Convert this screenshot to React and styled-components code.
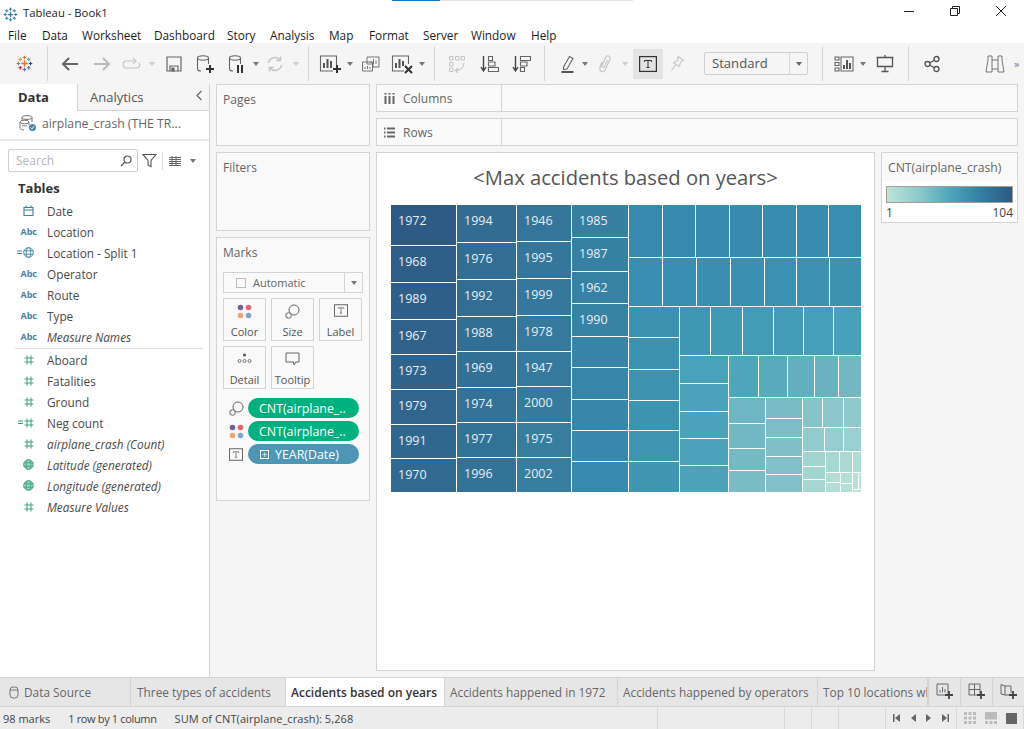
import React from 'react';
import styled, { createGlobalStyle } from 'styled-components';

const GlobalStyle = createGlobalStyle`
  html, body { margin: 0; padding: 0; background: #fff; }
  body { font-family: "Open Sans", "Noto Sans", sans-serif; font-size: 12px; color: #444; overflow: hidden; }
  * { box-sizing: border-box; }
`;

const Page = styled.div`
  width: 1024px;
  height: 729px;
  display: flex;
  flex-direction: column;
  overflow: hidden;
`;

/* window chrome */
const TopStrip = styled.div`
  height: 1px;
  flex: none;
  display: flex;
  padding-left: 392px;
`;
const StripPart = styled.div`
  width: ${p => p.$w}px;
  background: ${p => p.$color};
`;
const TitleBar = styled.div`
  height: 26px;
  flex: none;
  display: flex;
  align-items: center;
  padding-left: 3px;
`;
const TitleText = styled.div`
  font-size: 11.3px;
  color: #222;
  margin-left: 5px;
  flex: 1;
  position: relative;
  top: -2px;
`;
const WinButton = styled.div`
  width: ${p => p.$w}px;
  display: flex;
  justify-content: center;
  position: relative;
  top: -3px;
`;
const MenuBar = styled.div`
  height: 16px;
  flex: none;
  display: flex;
  gap: 16px;
  padding-left: 8px;
  align-items: center;
`;
const MenuItem = styled.div`
  font-size: 11.8px;
  color: #1c1c1c;
  width: ${p => p.$w}px;
  white-space: nowrap;
`;

/* toolbar */
const Toolbar = styled.div`
  height: 41px;
  flex: none;
  background: #f5f5f5;
  display: flex;
  align-items: center;
`;
const Tool = styled.div`
  width: ${p => p.$w}px;
  margin-left: ${p => p.$ml || 0}px;
  height: ${p => (p.$active ? 30 : 24)}px;
  flex: none;
  display: flex;
  align-items: center;
  justify-content: center;
  background: ${p => (p.$active ? '#e3e3e3' : 'transparent')};
`;
const ToolSep = styled.div`
  width: 1px;
  height: 35px;
  flex: none;
  margin-left: ${p => p.$ml}px;
  background: #d6d6d6;
`;
const Caret = styled.span`
  display: block;
  width: 0;
  height: 0;
  border-left: 3.5px solid transparent;
  border-right: 3.5px solid transparent;
  border-top: 4px solid ${p => p.$color || '#777'};
`;
const Select = styled.div`
  width: 104px;
  height: 23px;
  flex: none;
  margin-left: ${p => p.$ml}px;
  border: 1px solid #cfcfcf;
  border-radius: 2px;
  display: flex;
  align-items: center;
  justify-content: space-between;
  font-size: 13.1px;
  color: #555;
  padding-left: 7px;
`;
const SelectLabel = styled.span`
  position: relative;
  top: -1px;
`;
const SelectArrow = styled.div`
  width: 18px;
  height: 100%;
  border-left: 1px solid #d8d8d8;
  display: flex;
  align-items: center;
  justify-content: center;
`;
const Chevrons = styled.div`
  font-size: 11px;
  color: #777;
  width: 10px;
  margin-left: 5px;
  flex: none;
`;

/* main */
const Main = styled.div`
  flex: 1;
  min-height: 0;
  display: flex;
  background: #f5f5f5;
`;

const DataPane = styled.div`
  width: 210px;
  flex: none;
  background: #fff;
  border-right: 1px solid #d4d4d4;
`;
const PaneTabs = styled.div`
  height: 27px;
  display: flex;
`;
const DataTab = styled.div`
  width: 77px;
  padding: 4px 0 0 18px;
  font-size: 13px;
  font-weight: 700;
  color: #333;
`;
const AnalyticsTab = styled.div`
  flex: 1;
  display: flex;
  justify-content: space-between;
  background: #f5f5f5;
  border-left: 1px solid #d4d4d4;
  border-bottom: 1px solid #d4d4d4;
  padding: 4px 6px 0 12px;
  font-size: 13px;
  color: #555;
`;
const SourceRow = styled.div`
  height: 30px;
  display: flex;
  align-items: center;
  gap: 4px;
  padding: 0 0 3px 19px;
  font-size: 12.2px;
  color: #666;
  border-bottom: 2px solid #ececec;
`;
const SearchRow = styled.div`
  display: flex;
  align-items: center;
  padding: 7px 0 0 8px;
  height: 32px;
`;
const SearchBox = styled.div`
  width: 130px;
  height: 23px;
  border: 1px solid #cfcfcf;
  border-radius: 2px;
  display: flex;
  align-items: center;
  justify-content: space-between;
  padding: 0 5px 0 7px;
  color: #b5b5b5;
  font-size: 12px;
`;
const SearchSep = styled.div`
  width: 1px;
  height: 18px;
  background: #ddd;
  margin: 0 6px 0 5px;
`;
const TablesHead = styled.div`
  font-size: 13px;
  font-weight: 700;
  color: #333;
  padding: 6px 0 0 18px;
  height: 27px;
`;
const FieldList = styled.div`
  display: flex;
  flex-direction: column;
`;
const Field = styled.div`
  height: 21px;
  flex: none;
  display: flex;
  align-items: center;
  font-size: 11.8px;
  color: #4a4a4a;
  font-style: ${p => (p.$calc ? 'italic' : 'normal')};
`;
const FieldIcon = styled.div`
  width: 47px;
  flex: none;
  padding-right: 13px;
  display: flex;
  align-items: center;
  justify-content: flex-end;
`;
const AbcIcon = styled.span`
  font-size: 9px;
  font-weight: 700;
  font-style: normal;
  color: #4c7f9f;
  margin-right: -3px;
`;
const FieldDivider = styled.div`
  height: 1px;
  flex: none;
  background: #ddd;
  margin: 1px 6px 0 15px;
`;

const ShelfColumn = styled.div`
  width: 154px;
  flex: none;
  margin-left: 6px;
  display: flex;
  flex-direction: column;
  gap: 6px;
`;
const Card = styled.div`
  height: ${p => p.$h}px;
  flex: none;
  background: #f9f9f9;
  border: 1px solid #d4d4d4;
  padding: 6px 0 0 6px;
  font-size: 12px;
  color: #666;
`;
const MarksTitle = styled.div`
  height: 28px;
`;
const MarkSelect = styled.div`
  width: 140px;
  height: 21px;
  border: 1px solid #d4d4d4;
  display: flex;
  align-items: center;
  font-size: 11px;
  color: #666;
  padding-left: 12px;
  gap: 7px;
`;
const CheckBox = styled.span`
  width: 10px;
  height: 10px;
  border: 1px solid #bbb;
  background: #fafafa;
  flex: none;
`;
const MarkArrow = styled.div`
  margin-left: auto;
  width: 18px;
  height: 100%;
  border-left: 1px solid #d4d4d4;
  display: flex;
  align-items: center;
  justify-content: center;
`;
const MarkGrid = styled.div`
  display: grid;
  grid-template-columns: 43px 43px 43px;
  grid-auto-rows: 43px;
  column-gap: 5px;
  row-gap: 5px;
  margin-top: 5px;
  width: 140px;
`;
const MarkButton = styled.div`
  border: 1px solid #d4d4d4;
  display: flex;
  flex-direction: column;
  align-items: center;
  justify-content: space-between;
  padding: 5px 0 1px;
  font-size: 11px;
  color: #555;
`;
const PillList = styled.div`
  display: flex;
  flex-direction: column;
  gap: 3px;
  margin-top: 9px;
`;
const PillRow = styled.div`
  display: flex;
  align-items: center;
  height: 20px;
`;
const PillIcon = styled.div`
  width: 25px;
  padding-left: 6px;
  flex: none;
  display: flex;
  align-items: center;
`;
const Pill = styled.div`
  width: 111px;
  height: 20px;
  border-radius: 10px;
  background: ${p => p.$color};
  color: #fff;
  font-size: 12.4px;
  display: flex;
  align-items: center;
  gap: 6px;
  padding-left: ${p => (p.$plus ? 12 : 11)}px;
  white-space: nowrap;
`;
const PlusBox = styled.span`
  width: 9px;
  height: 9px;
  border: 1px solid #fff;
  display: flex;
  align-items: center;
  justify-content: center;
  font-size: 9px;
  line-height: 1;
  flex: none;
`;

const Workspace = styled.div`
  flex: 1;
  min-width: 0;
  margin-left: 6px;
  display: flex;
  flex-direction: column;
`;
const Shelf = styled.div`
  width: 642px;
  height: 28px;
  flex: none;
  margin-bottom: ${p => p.$mb}px;
  background: #f9f9f9;
  border: 1px solid #d4d4d4;
  display: flex;
`;
const ShelfLabel = styled.div`
  width: 125px;
  border-right: 1px solid #d4d4d4;
  display: flex;
  align-items: center;
  gap: 8px;
  padding-left: 7px;
  font-size: 12px;
  color: #666;
`;
const ViewRow = styled.div`
  display: flex;
  align-items: flex-start;
  gap: 6px;
  margin-top: 6px;
`;
const ViewCard = styled.div`
  width: 499px;
  height: 519px;
  flex: none;
  background: #fff;
  border: 1px solid #d4d4d4;
  padding: 0 0 0 14px;
`;
const ViewTitle = styled.div`
  height: 52px;
  padding: 10px 14px 0 0;
  text-align: center;
  font-size: 20.2px;
  color: #555;
  white-space: nowrap;
`;
const TreeSvg = styled.svg`
  display: block;
`;
const TreeLabel = styled.text`
  font-family: "Open Sans", "Noto Sans", sans-serif;
  font-size: 12.5px;
  fill: #e8eef2;
`;
const Legend = styled.div`
  width: 137px;
  height: 71px;
  flex: none;
  background: #fff;
  border: 1px solid #d4d4d4;
`;
const LegendHead = styled.div`
  height: 29px;
  background: #f9f9f9;
  padding: 6px 0 0 6px;
  font-size: 12.2px;
  color: #666;
`;
const LegendBar = styled.div`
  height: 17px;
  margin: 4px 4px 0;
  border: 1px solid #a79f91;
  background: linear-gradient(to right, #bce4d8, #8fcacb 25%, #4aa3ba 52%, #347fa3 75%, #2c5985);
`;
const LegendScale = styled.div`
  display: flex;
  justify-content: space-between;
  margin: 1px 4px 0;
  font-size: 12px;
  color: #444;
`;

/* bottom */
const TabBar = styled.div`
  height: 30px;
  flex: none;
  background: #e6e6e6;
  border-top: 1px solid #d4d4d4;
  border-bottom: 1px solid #d4d4d4;
  display: flex;
`;
const SheetTab = styled.div`
  width: ${p => p.$w}px;
  flex: none;
  overflow: hidden;
  white-space: nowrap;
  border-right: 1px solid #d4d4d4;
  display: flex;
  align-items: center;
  gap: 5px;
  padding-left: ${p => p.$pl}px;
  font-size: ${p => (p.$active ? 12 : 11.85)}px;
  font-weight: ${p => (p.$active ? 600 : 400)};
  color: ${p => (p.$active ? '#333' : '#666')};
  background: ${p => (p.$active ? '#fff' : 'transparent')};
`;
const TabTool = styled.div`
  flex: 1;
  border-left: 1px solid #d4d4d4;
  display: flex;
  align-items: center;
  justify-content: center;
`;
const StatusBar = styled.div`
  height: 22px;
  flex: none;
  background: #ececec;
  display: flex;
  font-size: 11px;
  color: #444;
`;
const StatusText = styled.div`
  padding: 0 0 0 ${p => p.$pl}px;
  letter-spacing: ${p => p.$ls || 0}px;
  white-space: nowrap;
`;
const StatusCell = styled.div`
  width: ${p => p.$w}px;
  flex: none;
  border-right: 1px solid #d8d8d8;
  display: flex;
  align-items: center;
  justify-content: ${p => p.$justify || 'flex-start'};
  gap: ${p => p.$gap || 0}px;
`;

/* drawings */
const Svg = ({ w = 22, h = 22, vb, children, stroke = '#555', sw = 1.4 }) => (
  <svg width={w} height={h} viewBox={vb || `0 0 ${w} ${h}`} fill="none" stroke={stroke} strokeWidth={sw}>
    {children}
  </svg>
);

const cross = (x, y, r, color, sw) => (
  <g stroke={color} strokeWidth={sw} key={`${x}-${y}`}>
    <path d={`M${x - r} ${y}H${x + r}M${x} ${y - r}V${y + r}`} />
  </g>
);

const TableauLogo = ({ size = 18, mono }) => {
  const c = (v) => mono || v;
  return (
    <svg width={size} height={size} viewBox="0 0 24 24" fill="none">
      {cross(12, 12, 4.5, c('#e8762d'), 2)}
      {cross(12, 3.5, 2.5, c('#e8762d'), 1.6)}
      {cross(12, 20.5, 2.5, c('#5b6591'), 1.6)}
      {cross(3.5, 12, 2.5, c('#59879b'), 1.6)}
      {cross(20.5, 12, 2.5, c('#1f457e'), 1.6)}
      {cross(6, 6, 2.5, c('#eb912b'), 1.6)}
      {cross(18, 6, 2.5, c('#7099a6'), 1.6)}
      {cross(6, 18, 2.5, c('#c72035'), 1.6)}
      {cross(18, 18, 2.5, c('#5b6591'), 1.6)}
    </svg>
  );
};

const Cylinder = ({ stroke = '#555', w = 14, h = 18 }) => (
  <svg width={w} height={h} viewBox="0 0 10 13" fill="none" stroke={stroke} strokeWidth="1">
    <rect x="1" y="1" width="8" height="11" rx="3" />
    <path d="M1 4H9" />
  </svg>
);

const Back = ({ stroke = '#666' }) => (
  <Svg w={20} h={18} stroke={stroke} sw={2}><path d="M18 9H3M9 3L3 9L9 15" /></Svg>
);
const Forward = ({ stroke = '#bbb' }) => (
  <Svg w={20} h={18} stroke={stroke} sw={2}><path d="M2 9H17M11 3L17 9L11 15" /></Svg>
);
const Redo = () => (
  <Svg w={20} h={14} stroke="#c6c6c6" sw={1.2}><path d="M13 4H4.5A3 3 0 0 0 4.500 11H14.500A3 3 0 0 0 17 6M11 1L14 4L11 7" /></Svg>
);
const Save = () => (
  <Svg w={18} h={18} stroke="#666" sw={1.2}><path d="M2 2H16V16H2ZM5 16V11H13V16" /><path d="M7 13H9V16H7Z" fill="#666" /></Svg>
);
const NewData = () => (
  <Svg w={20} h={20} stroke="#666" sw={1.1}>
    <ellipse cx="8" cy="4" rx="5.500" ry="2.200" />
    <path d="M2.500 4V15C2.500 16 4 17 6 17M13.500 4V10" />
    <path d="M15 11V19M11 15H19" stroke="#333" strokeWidth="2" />
  </Svg>
);
const PauseData = () => (
  <Svg w={20} h={20} stroke="#666" sw={1.1}>
    <ellipse cx="8" cy="4" rx="5.500" ry="2.200" />
    <path d="M2.500 4V15C2.500 16 4 17 6 17M13.500 4V10" />
    <path d="M11 11V19M15 11V19" stroke="#333" strokeWidth="2" />
  </Svg>
);
const Refresh = () => (
  <Svg w={18} h={18} stroke="#c4c4c4" sw={1.5}>
    <path d="M2.500 8A6.500 6.500 0 0 1 14 5M15.500 10A6.500 6.500 0 0 1 4 13" />
    <path d="M14.500 1.500V5.500H10.500M3.500 16.500V12.500H7.500" />
  </Svg>
);
const NewSheet = () => (
  <Svg w={24} h={20} stroke="#666" sw={1.1}>
    <path d="M14 17H1.500V2H17.500V11" />
    <path d="M5 14V9M8.500 14V5M12 14V7" strokeWidth="2" stroke="#555" />
    <path d="M18 11V19M14 15H22" stroke="#333" strokeWidth="2" />
  </Svg>
);
const Duplicate = () => (
  <Svg w={20} h={20} stroke="#666" sw={0.9}>
    <path d="M6 3H18V13H12V10H6Z" />
    <path d="M1.500 8H11.500V17H1.500Z" />
    <path d="M10 9V7M12.500 10V5M15 10V6.500M4 15V13M6.500 15V12M9 15V13" />
  </Svg>
);
const ClearSheet = () => (
  <Svg w={24} h={20} stroke="#666" sw={1.1}>
    <path d="M13 17H1.500V2H17.500V10" />
    <path d="M5 14V9M8.500 14V5M12 12V7" strokeWidth="2" stroke="#555" />
    <path d="M14 12L21 19M21 12L14 19" stroke="#333" strokeWidth="2" />
  </Svg>
);
const Swap = () => (
  <Svg w={18} h={18} stroke="#c4c4c4" sw={1}>
    <path d="M1.500 1.500H5V5H1.500ZM7.500 1.500H11V5H7.500ZM13 1.500H16.500V5H13ZM1.500 7.500H5V11H1.500ZM1.500 13H5V16.500H1.500Z" />
    <path d="M16 8C16 13 12 15.500 8 15.500M10 13L7.500 15.500L10 18" strokeWidth="1.200" />
  </Svg>
);
const SortAsc = () => (
  <Svg w={20} h={18} stroke="#666" sw={1.1}>
    <path d="M3.500 1V15M1 12L3.500 16L6 12" strokeWidth="1.400" stroke="#444" />
    <path d="M8.500 1.500H12.500V5.500H8.500ZM8.500 7H15V11H8.500ZM8.500 12.500H18.500V16.500H8.500Z" />
  </Svg>
);
const SortDesc = () => (
  <Svg w={20} h={18} stroke="#666" sw={1.1}>
    <path d="M3.500 1V15M1 12L3.500 16L6 12" strokeWidth="1.400" stroke="#444" />
    <path d="M8.500 1.500H18.500V5.500H8.500ZM8.500 7H15V11H8.500ZM8.500 12.500H12.500V16.500H8.500Z" />
  </Svg>
);
const Highlighter = () => (
  <Svg w={16} h={20} stroke="#666" sw={1.1}>
    <path d="M3.500 13L9.500 2.500L13 4.500L7 15L3.500 15.500Z" />
    <path d="M1.500 18H13.500" stroke="#555" strokeWidth="2" />
  </Svg>
);
const Clip = () => (
  <Svg w={16} h={20} stroke="#c4c4c4" sw={1.2}>
    <path d="M5 8L3 13.500C2 17 6 19.500 8 16L13 5.500C14 2 10 0.500 8.500 3.500L5 11.500C4.500 13.500 6.500 14 7.500 12.500L10.500 6" />
  </Svg>
);
const TBox = ({ w = 18, h = 16, stroke = '#333', sw = 1.2 }) => (
  <svg width={w} height={h} viewBox="0 0 18 16" fill="none" stroke={stroke} strokeWidth={sw}>
    <rect x="0.6" y="0.6" width="16.800" height="14.800" />
    <path d="M5.500 6V4.500H12.500V6M9 4.500V11.500M7.500 11.500H10.500" strokeWidth="1" />
  </svg>
);
const Pin = () => (
  <Svg w={16} h={18} stroke="#c4c4c4" sw={1.1}>
    <path d="M9 1.500L14.500 5.500L11.500 7L10.500 11.500L4.500 8L8.500 5.500ZM6.500 10L2.500 15.500" />
  </Svg>
);
const ShowMe = () => (
  <Svg w={20} h={16} stroke="#666" sw={1.1}>
    <path d="M1 1H5V4H1ZM1 6.500H5V9.500H1ZM1 12H5V15H1ZM7 1H19V15H7Z" />
    <path d="M10 13V9M13 13V4M16 13V7" strokeWidth="2" stroke="#555" />
  </Svg>
);
const Present = () => (
  <Svg w={18} h={18} stroke="#555" sw={1.3}>
    <path d="M0.500 2.500H17.500M1.500 2.500V11.500H16.500V2.500M9 0V2.500M9 11.500V16.500M5.500 16.500H12.500" />
  </Svg>
);
const Share = () => (
  <Svg w={16} h={18} stroke="#555" sw={1.3}>
    <circle cx="3.500" cy="9" r="2.500" /><circle cx="12.500" cy="4" r="2.500" /><circle cx="12.500" cy="14" r="2.500" />
    <path d="M5.800 8L10.200 5.200M5.800 10L10.200 12.800" />
  </Svg>
);
const Binoculars = () => (
  <Svg w={20} h={20} stroke="#777" sw={1}>
    <path d="M1 18L3 6V2H7V18ZM13 18V2H17V6L19 18ZM7 6H13M7 15H13" />
  </Svg>
);

const Magnifier = () => (
  <Svg w={12} h={12} stroke="#555" sw={1.2}><circle cx="7.500" cy="4.500" r="3.500" /><path d="M5 7L1 11" /></Svg>
);
const Funnel = () => (
  <Svg w={15} h={15} stroke="#555" sw={1.1}><path d="M1 1.500H14L9 7.500V13.500L6 12V7.500Z" /></Svg>
);
const ListIcon = () => (
  <Svg w={12} h={10} stroke="#666" sw={1}><path d="M0 1.500H12M0 3.500H12M0 5.500H12M0 7.500H12M0 9.500H12M3 0V10M7 0V10" /></Svg>
);
const SourceIcon = () => (
  <svg width="19" height="17" viewBox="0 0 19 17" fill="none" stroke="#777" strokeWidth="1">
    <ellipse cx="8" cy="2.500" rx="5" ry="2" />
    <path d="M3 2.500V6M13 2.500V7" />
    <ellipse cx="5.500" cy="7" rx="4.500" ry="1.800" />
    <path d="M1 7V13C1 14 3 15 5 15M10 7V10M3 10.500C4 11 6 11 8 10.500" />
    <circle cx="13.500" cy="12.500" r="3.500" fill="#4b88a8" stroke="none" />
    <path d="M11.800 12.500L13 13.800L15.200 11.300" stroke="#fff" />
  </svg>
);
const Calendar = () => (
  <Svg w={11} h={11} stroke="#3f7f9f" sw={1.1}>
    <path d="M1 2.500H10V10.500H1ZM1 5H10M3 0.500V2.500M8 0.500V2.500" />
  </Svg>
);
const Globe = ({ stroke, fill }) => (
  <svg width="11" height="11" viewBox="0 0 11 11" fill={fill || 'none'} stroke={stroke} strokeWidth="0.9">
    <circle cx="5.500" cy="5.500" r="4.800" />
    <ellipse cx="5.500" cy="5.500" rx="2.200" ry="4.800" />
    <path d="M0.700 3.800H10.300M0.700 7.200H10.300" />
  </svg>
);
const Hash = () => (
  <Svg w={10} h={10} stroke="#3ea07d" sw={1}>
    <path d="M3 0.500V9.500M7 0.500V9.500M0.500 3H9.500M0.500 7H9.500" />
  </Svg>
);
const LinkedMark = styled.svg`
  margin-right: 1px;
`;
const Linked = ({ color }) => (
  <LinkedMark width="5" height="5" viewBox="0 0 5 5" stroke={color} strokeWidth="1">
    <path d="M0 1H5M0 3.500H5" />
  </LinkedMark>
);
const DotsIcon = ({ size = 15 }) => (
  <svg width={size} height={size} viewBox="0 0 15 15">
    <circle cx="3.500" cy="3.500" r="2.800" fill="#75608f" />
    <circle cx="11.500" cy="3.500" r="2.800" fill="#e8656f" />
    <circle cx="3.500" cy="11.500" r="2.800" fill="#efa56f" />
    <circle cx="11.500" cy="11.500" r="2.800" fill="#7ea6cf" />
  </svg>
);
const SizeIcon = ({ size = 15 }) => (
  <svg width={size} height={size} viewBox="0 0 15 15" fill="none" stroke="#666" strokeWidth="1">
    <circle cx="9" cy="6" r="5" />
    <circle cx="3.500" cy="11.500" r="2.800" fill="#f9f9f9" />
  </svg>
);
const DetailIcon = () => (
  <svg width="15" height="12" viewBox="0 0 15 12" fill="none" stroke="#666" strokeWidth="0.9">
    <circle cx="7.500" cy="3" r="1.500" fill="#555" stroke="none" />
    <circle cx="2.500" cy="9" r="1.500" /><circle cx="7.500" cy="9" r="1.500" /><circle cx="12.500" cy="9" r="1.500" />
  </svg>
);
const TooltipIcon = () => (
  <svg width="15" height="14" viewBox="0 0 15 14" fill="none" stroke="#666" strokeWidth="1">
    <path d="M1 1H14V10H11L9 13L8.500 10H1Z" />
  </svg>
);

const lerp = (a, b, t) => {
  const pa = [1, 3, 5].map(i => parseInt(a.slice(i, i + 2), 16));
  const pb = [1, 3, 5].map(i => parseInt(b.slice(i, i + 2), 16));
  return `rgb(${pa.map((v, i) => Math.round(v + (pb[i] - v) * t)).join(',')})`;
};

/* treemap groups: a box cut along one axis, coloured from c0 to c1 */
const treeGroups = [
  { x0: 391, x1: 456, y0: 205, y1: 492, dir: 'v', cuts: [245, 282, 319, 354, 389, 424, 458], c0: '#2d5b86', c1: '#316990', labels: ['1972', '1968', '1989', '1967', '1973', '1979', '1991', '1970'] },
  { x0: 457, x1: 516, y0: 205, y1: 492, dir: 'v', cuts: [242, 279, 316, 351, 387, 422, 457], c0: '#326c93', c1: '#337398', labels: ['1994', '1976', '1992', '1988', '1969', '1974', '1977', '1996'] },
  { x0: 517, x1: 571, y0: 205, y1: 492, dir: 'v', cuts: [241, 278, 315, 351, 386, 422, 457], c0: '#34759b', c1: '#367e9f', labels: ['1946', '1995', '1999', '1978', '1947', '2000', '1975', '2002'] },
  { x0: 572, x1: 628, y0: 205, y1: 492, dir: 'v', cuts: [237, 271, 303, 336, 367, 399, 430, 461], c0: '#367fa2', c1: '#3789ad', labels: ['1985', '1987', '1962', '1990'] },
  { x0: 629, x1: 861, y0: 205, y1: 257, dir: 'h', cuts: [662, 695, 729, 762, 796, 828], c0: '#3789ad', c1: '#398db1' },
  { x0: 629, x1: 861, y0: 258, y1: 306, dir: 'h', cuts: [662, 696, 730, 764, 796, 829], c0: '#398eb1', c1: '#3b92b1' },
  { x0: 629, x1: 679, y0: 307, y1: 492, dir: 'v', cuts: [337, 369, 400, 430, 461], c0: '#3b92b1', c1: '#3e96b1' },
  { x0: 680, x1: 861, y0: 307, y1: 355, dir: 'h', cuts: [710, 742, 773, 803, 833], c0: '#3f98b3', c1: '#46a1b9' },
  { x0: 680, x1: 728, y0: 356, y1: 492, dir: 'v', cuts: [383, 411, 438, 465], c0: '#48a2ba', c1: '#4ba3ba' },
  { x0: 729, x1: 861, y0: 356, y1: 397, dir: 'h', cuts: [758, 787, 814, 838], c0: '#4fa5bb', c1: '#72b8c3' },
  { x0: 729, x1: 765, y0: 398, y1: 492, dir: 'v', cuts: [423, 448, 470], c0: '#6eb6c3', c1: '#79bbc6' },
  { x0: 766, x1: 802, y0: 398, y1: 492, dir: 'v', cuts: [418, 437, 456, 474], c0: '#7abcc6', c1: '#83c1c9' },
  { x0: 803, x1: 861, y0: 398, y1: 427, dir: 'h', cuts: [822, 843], c0: '#87c4ca', c1: '#8fc9cd' },
  { x0: 803, x1: 861, y0: 428, y1: 451, dir: 'h', cuts: [824, 843], c0: '#92cbcd', c1: '#9ad0d0' },
  { x0: 803, x1: 825, y0: 452, y1: 492, dir: 'v', cuts: [466, 479], c0: '#a2d5d0', c1: '#a6d7d1' },
  { x0: 826, x1: 861, y0: 452, y1: 472, dir: 'h', cuts: [839, 852], c0: '#a8d8d2', c1: '#b0dcd4' },
  { x0: 826, x1: 840, y0: 473, y1: 492, dir: 'v', cuts: [482], c0: '#b1ddd4', c1: '#b3ded5' },
  { x0: 841, x1: 852, y0: 473, y1: 492, dir: 'v', cuts: [483], c0: '#b4dfd6', c1: '#b6e0d6' },
  { x0: 853, x1: 861, y0: 473, y1: 489, dir: 'h', cuts: [858], c0: '#b7e1d7', c1: '#b9e2d7' },
  { x0: 853, x1: 861, y0: 490, y1: 492, dir: 'h', cuts: [], c0: '#bce4d8', c1: '#bce4d8' },
];

const treeCells = treeGroups.flatMap((g) => {
  const stops = [...g.cuts, g.dir === 'v' ? g.y1 : g.x1];
  let start = g.dir === 'v' ? g.y0 : g.x0;
  return stops.map((end, i) => {
    const cell = g.dir === 'v'
      ? { x: g.x0, y: start, width: g.x1 - g.x0, height: end - start }
      : { x: start, y: g.y0, width: end - start, height: g.y1 - g.y0 };
    start = end + 1;
    return {
      ...cell,
      fill: lerp(g.c0, g.c1, stops.length > 1 ? i / (stops.length - 1) : 0),
      label: g.labels && g.labels[i],
    };
  });
});

const Treemap = () => (
  <TreeSvg width="470" height="287" viewBox="391 205 470 287">
    {treeCells.map(c => (
      <rect key={`${c.x}-${c.y}`} x={c.x} y={c.y} width={c.width} height={c.height} fill={c.fill} />
    ))}
    {treeCells.filter(c => c.label).map(c => (
      <TreeLabel key={c.label} x={c.x + 7} y={c.y + 20}>{c.label}</TreeLabel>
    ))}
  </TreeSvg>
);

const menus = [
  ['File', 18], ['Data', 24], ['Worksheet', 56], ['Dashboard', 57], ['Story', 27], ['Analysis', 43],
  ['Map', 24], ['Format', 38], ['Server', 32], ['Window', 44], ['Help', 24],
];

const dims = [
  [<Calendar />, 'Date'],
  [<AbcIcon>Abc</AbcIcon>, 'Location'],
  [<><Linked color="#3f7f9f" /><Globe stroke="#3f7f9f" /></>, 'Location - Split 1'],
  [<AbcIcon>Abc</AbcIcon>, 'Operator'],
  [<AbcIcon>Abc</AbcIcon>, 'Route'],
  [<AbcIcon>Abc</AbcIcon>, 'Type'],
  [<AbcIcon>Abc</AbcIcon>, 'Measure Names', true],
];
const measures = [
  [<Hash />, 'Aboard'],
  [<Hash />, 'Fatalities'],
  [<Hash />, 'Ground'],
  [<><Linked color="#3ea07d" /><Hash /></>, 'Neg count'],
  [<Hash />, 'airplane_crash (Count)', true],
  [<Globe stroke="#3ea07d" fill="#9bd6bf" />, 'Latitude (generated)', true],
  [<Globe stroke="#3ea07d" fill="#9bd6bf" />, 'Longitude (generated)', true],
  [<Hash />, 'Measure Values', true],
];

const FieldRows = ({ items }) => items.map(([icon, name, calc]) => (
  <Field key={name} $calc={calc}>
    <FieldIcon>{icon}</FieldIcon>
    {name}
  </Field>
));

const sheetTabs = [
  { name: 'Three types of accidents', w: 155, pl: 6 },
  { name: 'Accidents based on years', w: 159, pl: 5, active: true },
  { name: 'Accidents happened in 1972', w: 173, pl: 5 },
  { name: 'Accidents happened by operators', w: 200, pl: 5 },
  { name: 'Top 10 locations wh', w: 110, pl: 5 },
];

const NewDash = () => (
  <Svg w={18} h={18} stroke="#666" sw={1}>
    <path d="M1 1H12V12H1ZM1 6.500H12M6.500 1V12" />
    <path d="M13 8V16M9 12H17" stroke="#444" strokeWidth="1.800" />
  </Svg>
);
const NewTabSheet = () => (
  <Svg w={18} h={18} stroke="#666" sw={1}>
    <path d="M1 1H12V12H1Z" />
    <path d="M4 9.500V7M6.500 9.500V4M9 9.500V6" />
    <path d="M13 8V16M9 12H17" stroke="#444" strokeWidth="1.800" />
  </Svg>
);
const NewStory = () => (
  <Svg w={18} h={18} stroke="#666" sw={1}>
    <path d="M1 1.500L5 3V12L1 11ZM5 3H11V10M5 12H9" />
    <path d="M13 8V16M9 12H17" stroke="#444" strokeWidth="1.800" />
  </Svg>
);
const Nav = ({ d }) => (
  <svg width="8" height="8" viewBox="0 0 8 8" fill="#666"><path d={d} /></svg>
);
const GridDots = () => (
  <svg width="12" height="12" viewBox="0 0 12 12" fill="#bbb">
    {[0, 4.500, 9].flatMap(y => [0, 4.500, 9].map(x => <rect key={`${x}${y}`} x={x} y={y} width="3" height="3" />))}
  </svg>
);
const GridBig = () => (
  <svg width="12" height="12" viewBox="0 0 12 12" fill="#bbb">
    <rect width="12" height="7.500" />
    {[0, 4.500, 9].map(x => <rect key={x} x={x} y="9" width="3" height="3" />)}
  </svg>
);

const App = () => (
  <Page>
    <GlobalStyle />
    <TopStrip>
      <StripPart $w={48} $color="#0a78d4" />
      <StripPart $w={193} $color="#e4e4e4" />
    </TopStrip>
    <TitleBar>
      <TableauLogo size={15} mono="#2f78a8" />
      <TitleText>Tableau - Book1</TitleText>
      <WinButton $w={46}>
        <svg width="10" height="10" viewBox="0 0 10 10" stroke="#222"><path d="M0 5.500H10" /></svg>
      </WinButton>
      <WinButton $w={46}>
        <svg width="10" height="10" viewBox="0 0 10 10" stroke="#222" fill="none"><path d="M0.500 2.500H7.500V9.500H0.500ZM2.500 2.500V0.500H9.500V7.500H7.500" /></svg>
      </WinButton>
      <WinButton $w={46}>
        <svg width="10" height="10" viewBox="0 0 10 10" stroke="#222"><path d="M0 0L10 10M10 0L0 10" /></svg>
      </WinButton>
    </TitleBar>
    <MenuBar>
      {menus.map(([name, w]) => <MenuItem key={name} $w={w}>{name}</MenuItem>)}
    </MenuBar>

    <Toolbar>
      <Tool $ml={8} $w={32}><TableauLogo size={17} /></Tool>
      <ToolSep $ml={7} />
      <Tool $ml={8} $w={28}><Back /></Tool>
      <Tool $ml={4} $w={28}><Forward /></Tool>
      <Tool $ml={2} $w={28}><Redo /></Tool>
      <Tool $ml={2} $w={8}><Caret $color="#ccc" /></Tool>
      <Tool $ml={4} $w={28}><Save /></Tool>
      <Tool $ml={3} $w={28}><NewData /></Tool>
      <Tool $ml={4} $w={28}><PauseData /></Tool>
      <Tool $ml={1} $w={8}><Caret /></Tool>
      <Tool $ml={1} $w={28}><Refresh /></Tool>
      <Tool $ml={3} $w={8}><Caret $color="#ccc" /></Tool>
      <ToolSep $ml={8} />
      <Tool $ml={8} $w={28}><NewSheet /></Tool>
      <Tool $ml={1} $w={8}><Caret /></Tool>
      <Tool $ml={3} $w={28}><Duplicate /></Tool>
      <Tool $ml={4} $w={28}><ClearSheet /></Tool>
      <Tool $ml={1} $w={8}><Caret /></Tool>
      <ToolSep $ml={8} />
      <Tool $ml={8} $w={28}><Swap /></Tool>
      <Tool $ml={5} $w={28}><SortAsc /></Tool>
      <Tool $ml={4} $w={28}><SortDesc /></Tool>
      <ToolSep $ml={8} />
      <Tool $ml={9} $w={28}><Highlighter /></Tool>
      <Tool $ml={-1} $w={8}><Caret /></Tool>
      <Tool $ml={2} $w={28}><Clip /></Tool>
      <Tool $ml={2} $w={8}><Caret $color="#ccc" /></Tool>
      <Tool $ml={4} $w={30} $active><TBox /></Tool>
      <Tool $w={28}><Pin /></Tool>
      <Select $ml={13}>
        <SelectLabel>Standard</SelectLabel>
        <SelectArrow><Caret $color="#666" /></SelectArrow>
      </Select>
      <ToolSep $ml={14} />
      <Tool $ml={7} $w={28}><ShowMe /></Tool>
      <Tool $ml={1} $w={8}><Caret /></Tool>
      <Tool $ml={4} $w={28}><Present /></Tool>
      <ToolSep $ml={9} />
      <Tool $ml={9} $w={28}><Share /></Tool>
      <Tool $ml={35} $w={28}><Binoculars /></Tool>
      <Chevrons>»</Chevrons>
    </Toolbar>

    <Main>
      <DataPane>
        <PaneTabs>
          <DataTab>Data</DataTab>
          <AnalyticsTab>
            Analytics
            <svg width="8" height="14" viewBox="0 0 8 14" fill="none" stroke="#666" strokeWidth="1.200"><path d="M6.500 3L2 7.500L6.500 12" /></svg>
          </AnalyticsTab>
        </PaneTabs>
        <SourceRow><SourceIcon />airplane_crash (THE TR...</SourceRow>
        <SearchRow>
          <SearchBox>Search<Magnifier /></SearchBox>
          <Tool $ml={4} $w={15}><Funnel /></Tool>
          <SearchSep />
          <ListIcon />
          <Tool $ml={8} $w={8}><Caret /></Tool>
        </SearchRow>
        <TablesHead>Tables</TablesHead>
        <FieldList>
          <FieldRows items={dims} />
          <FieldDivider />
          <FieldRows items={measures} />
        </FieldList>
      </DataPane>

      <ShelfColumn>
        <Card $h={62}>Pages</Card>
        <Card $h={79}>Filters</Card>
        <Card $h={264}>
          <MarksTitle>Marks</MarksTitle>
          <MarkSelect>
            <CheckBox />
            Automatic
            <MarkArrow><Caret /></MarkArrow>
          </MarkSelect>
          <MarkGrid>
            <MarkButton><DotsIcon />Color</MarkButton>
            <MarkButton><SizeIcon />Size</MarkButton>
            <MarkButton><TBox w={14} h={13} stroke="#666" sw={1.3} />Label</MarkButton>
            <MarkButton><DetailIcon />Detail</MarkButton>
            <MarkButton><TooltipIcon />Tooltip</MarkButton>
          </MarkGrid>
          <PillList>
            <PillRow>
              <PillIcon><SizeIcon /></PillIcon>
              <Pill $color="#00b180">CNT(airplane_..</Pill>
            </PillRow>
            <PillRow>
              <PillIcon><DotsIcon /></PillIcon>
              <Pill $color="#00b180">CNT(airplane_..</Pill>
            </PillRow>
            <PillRow>
              <PillIcon><TBox w={14} h={13} stroke="#666" sw={1.3} /></PillIcon>
              <Pill $color="#4e96b5" $plus><PlusBox>+</PlusBox>YEAR(Date)</Pill>
            </PillRow>
          </PillList>
        </Card>
      </ShelfColumn>

      <Workspace>
        <Shelf $mb={6}>
          <ShelfLabel>
            <Svg w={11} h={11} stroke="#666" sw={2}><path d="M1.500 3V11M5.500 3V11M9.500 3V11" /><path d="M1.500 0V1.500M5.500 0V1.500M9.500 0V1.500" /></Svg>
            Columns
          </ShelfLabel>
        </Shelf>
        <Shelf $mb={0}>
          <ShelfLabel>
            <Svg w={11} h={11} stroke="#666" sw={2}><path d="M3 1.500H11M3 5.500H11M3 9.500H11M0 1.500H1.500M0 5.500H1.500M0 9.500H1.500" /></Svg>
            Rows
          </ShelfLabel>
        </Shelf>
        <ViewRow>
          <ViewCard>
            <ViewTitle>&lt;Max accidents based on years&gt;</ViewTitle>
            <Treemap />
          </ViewCard>
          <Legend>
            <LegendHead>CNT(airplane_crash)</LegendHead>
            <LegendBar />
            <LegendScale><span>1</span><span>104</span></LegendScale>
          </Legend>
        </ViewRow>
      </Workspace>
    </Main>

    <TabBar>
      <SheetTab $w={131} $pl={9}><Cylinder w={10} h={13} stroke="#777" />Data Source</SheetTab>
      {sheetTabs.map(t => (
        <SheetTab key={t.name} $w={t.w} $pl={t.pl} $active={t.active}>{t.name}</SheetTab>
      ))}
      <TabTool><NewTabSheet /></TabTool>
      <TabTool><NewDash /></TabTool>
      <TabTool><NewStory /></TabTool>
    </TabBar>
    <StatusBar>
      <StatusCell $w={658}>
        <StatusText $pl={3}>98 marks</StatusText>
        <StatusText $pl={18} $ls={-0.35}>1 row by 1 column</StatusText>
        <StatusText $pl={18} $ls={0.08}>SUM of CNT(airplane_crash): 5,268</StatusText>
      </StatusCell>
      <StatusCell $w={127} />
      <StatusCell $w={27} />
      <StatusCell $w={27} />
      <StatusCell $w={47} />
      <StatusCell $w={71} $justify="center" $gap={8}>
        <Nav d="M0 0H1.500V8H0ZM7 0V8L2 4Z" />
        <Nav d="M7 0V8L2 4Z" />
        <Nav d="M1 0V8L6 4Z" />
        <Nav d="M1 0V8L6 4ZM6.500 0H8V8H6.500Z" />
      </StatusCell>
      <StatusCell $justify="center" $gap={9} $w={67}>
        <GridDots />
        <GridBig />
        <svg width="11" height="11" viewBox="0 0 11 11" fill="#666"><rect width="11" height="11" /></svg>
      </StatusCell>
    </StatusBar>
  </Page>
);

export default App;
